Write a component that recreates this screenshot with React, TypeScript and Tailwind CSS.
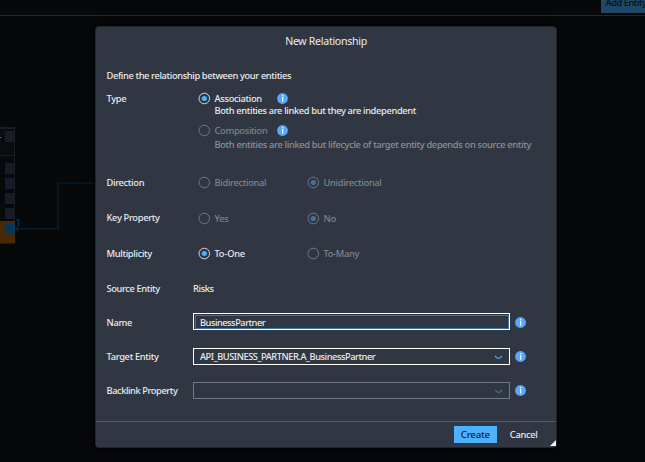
import React from "react";

function Radio({ on = false, dim = false }: { on?: boolean; dim?: boolean }) {
  return (
    <svg width="13" height="13" viewBox="0 0 13 13" className={dim ? "shrink-0 opacity-50" : "shrink-0"}>
      <circle cx="6.3" cy="6.5" r="5.3" fill="none" stroke={dim ? "#b4b9c0" : "#d5d9de"} strokeWidth="1" />
      {on && <circle cx="6.3" cy="6.5" r="2.6" fill="#4db1ff" />}
    </svg>
  );
}

function Info() {
  return (
    <svg width="11" height="11" viewBox="0 0 11 11" className="shrink-0">
      <circle cx="5.5" cy="5.5" r="5.4" fill="#55aaff" />
      <rect x="5" y="2" width="1.3" height="1.3" fill="#fff" />
      <rect x="5" y="4" width="1.3" height="4.6" fill="#fff" />
    </svg>
  );
}

function Chevron({ dim = false }: { dim?: boolean }) {
  return (
    <svg width="9" height="5" viewBox="0 0 9 5" className={dim ? "mt-[2px] opacity-50" : "mt-[2px]"}>
      <path d="M1 1 L3.5 3.3 H5.5 L8 1" fill="none" stroke="#4db1ff" strokeWidth="1.1" />
    </svg>
  );
}

function FocusRing() {
  return (
    <svg width="314" height="14" viewBox="0 0 314 14" className="absolute top-px left-px">
      <rect x="0.5" y="0.5" width="313" height="13" fill="none" stroke="#4db1ff" strokeWidth="1" strokeDasharray="1 1" />
    </svg>
  );
}

function Choice({ label, on, dim, className = "" }: { label: string; on?: boolean; dim?: boolean; className?: string }) {
  return (
    <div className={"flex items-center gap-[4px] " + className}>
      <Radio on={on} dim={dim} />
      <span className={dim ? "pt-[1px] text-[#7e848c]" : "pt-[1px]"}>{label}</span>
    </div>
  );
}

function Row({ label, className, children }: { label: string; className: string; children: React.ReactNode }) {
  return (
    <div className={"flex items-center " + className}>
      <div className="w-[86.5px] shrink-0">{label}</div>
      {children}
    </div>
  );
}

function Backdrop() {
  return (
    <svg width="645" height="462" viewBox="0 0 645 462" className="absolute inset-0">
      <rect y="15" width="645" height="1" fill="#25272e" />
      <g shapeRendering="crispEdges">
        <rect y="127" width="15" height="117" fill="#1b1c1e" />
        <rect y="129" width="14" height="26" fill="#0b0c0f" />
        <rect y="156" width="14" height="65" fill="#07090b" />
        <rect y="137" width="1" height="1" fill="#777" />
        <rect x="5" y="131" width="9" height="11" fill="#151e28" />
        <rect x="5" y="163" width="9" height="11" fill="#151e28" />
        <rect x="5" y="178" width="9" height="11" fill="#151e28" />
        <rect x="5" y="193" width="9" height="11" fill="#151e28" />
        <rect x="5" y="208" width="9" height="11" fill="#151e28" />
        <rect y="221" width="15" height="22" fill="#462a08" />
        <rect x="5" y="224" width="10" height="10" fill="#07365b" />
      </g>
      <path d="M15 228.8 H58 V183 H96" fill="none" stroke="#061b2b" strokeWidth="1.6" />
      <path d="M18.5 226 L15.5 228.8 L18.5 231.5" fill="none" stroke="#07304f" strokeWidth="1" />
      <text x="16" y="226" fontSize="8" fill="#07406d" fontFamily="Noto Sans, sans-serif">1</text>
    </svg>
  );
}

export default function App() {
  return (
    <div className="relative flex h-[462px] w-[645px] overflow-hidden bg-[#07080a] font-['Noto_Sans',sans-serif] text-[9.3px] leading-[12px] font-medium tracking-[-0.32px] whitespace-nowrap text-[#eaecef]">
      <Backdrop />
      <div className="absolute top-0 right-0 h-[13px] w-[44px] overflow-hidden bg-[#1f4768] pl-[4.5px] tracking-[-0.45px] text-[#090d12]">
        <div className="-mt-[3px]">Add Entity</div>
      </div>

      <div className="relative mt-[26px] ml-[95px] flex h-[422px] w-[462px] flex-col rounded-[4px] border border-[#20252c] bg-[#313742] shadow-[0_0_10px_#000]">
        <div className="flex h-[28px] items-center justify-center text-[10.6px] font-normal tracking-[-0.3px]">New Relationship</div>
        <div className="flex flex-col pl-[10.5px]">
          <div className="mt-[15px] h-[12px] tracking-[-0.37px]">Define the relationship between your entities</div>
          <div className="mt-[10px] flex h-[62px]">
            <div className="w-[91px] shrink-0 pt-[1px]">Type</div>
            <div className="flex flex-col">
              <div className="flex h-[13px] items-center">
                <Choice label="Association" on className="w-[79.5px]" />
                <Info />
              </div>
              <div className="pl-[17px] tracking-[-0.35px]">Both entities are linked but they are independent</div>
              <div className="mt-[7px] flex h-[13px] items-center">
                <Choice label="Composition" dim className="w-[79.5px]" />
                <Info />
              </div>
              <div className="mt-[2px] pl-[17px] tracking-[-0.33px] text-[#8b9098]">Both entities are linked but lifecycle of target entity depends on source entity</div>
            </div>
          </div>
          <Row label="Direction" className="mt-[11px] h-[35px]">
            <Choice label="Bidirectional" dim className="ml-[4.5px] w-[109px]" />
            <Choice label="Unidirectional" on dim />
          </Row>
          <Row label="Key Property" className="h-[36px]">
            <Choice label="Yes" dim className="ml-[4.5px] w-[109px]" />
            <Choice label="No" on dim />
          </Row>
          <Row label="Multiplicity" className="h-[35px]">
            <Choice label="To-One" on className="ml-[4.5px] w-[109px] tracking-[-0.2px]" />
            <Choice label="To-Many" dim />
          </Row>
          <Row label="Source Entity" className="h-[35px] tracking-[-0.38px]">Risks</Row>
          <Row label="Name" className="h-[33px]">
            <div className="relative mr-[5px] mb-[2px] flex h-[17px] w-[317px] items-center border border-white pt-[2px] pl-[6px] tracking-[-0.5px]">
              BusinessPartner
              <FocusRing />
            </div>
            <Info />
          </Row>
          <Row label="Target Entity" className="h-[35px]">
            <div className="mr-[5px] flex h-[17px] w-[317px] items-center justify-between border border-white pr-[6px] pl-[6px]">
              <span className="tracking-[-0.47px]">API_BUSINESS_PARTNER.A_BusinessPartner</span>
              <Chevron />
            </div>
            <Info />
          </Row>
          <Row label="Backlink Property" className="h-[33px] tracking-[-0.43px]">
            <div className="mr-[5px] flex h-[17px] w-[317px] items-center justify-end border border-[#747a82] pr-[6px]">
              <Chevron dim />
            </div>
            <Info />
          </Row>
        </div>
        <div className="relative mt-auto flex h-[26px] items-center justify-end border-t border-[#555a60] pr-[18.5px]">
          <div className="flex h-[17px] w-[43px] items-center justify-center bg-[#4db1ff] pt-px text-[9.6px] tracking-[-0.15px] text-[#102233]">Create</div>
          <div className="ml-[13px] pt-px tracking-[-0.3px]">Cancel</div>
          <svg width="6" height="6" viewBox="0 0 6 6" className="absolute right-0 bottom-px">
            <path d="M6 0 V6 H0 Z" fill="#f2f4f6" />
          </svg>
        </div>
      </div>
    </div>
  );
}
